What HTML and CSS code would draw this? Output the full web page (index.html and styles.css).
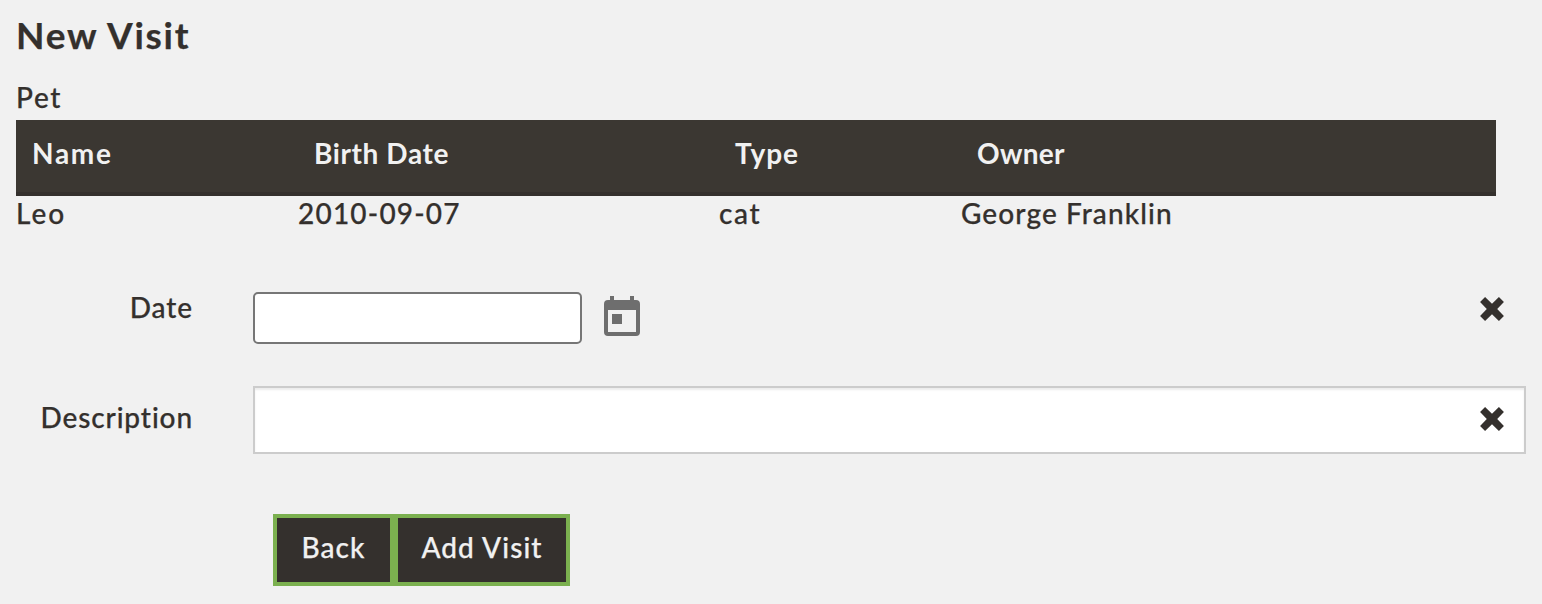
FILE: index.html
```html
<!DOCTYPE html>
<html lang="en">
<head>
<meta charset="utf-8">
<title>New Visit</title>
<link rel="stylesheet" href="styles.css">
</head>
<body>
<main class="page">
  <h2 class="title">New Visit</h2>
  <div class="caption">Pet</div>
  <div class="table">
    <div class="row head"><span class="h-name">Name</span><span class="h-birth">Birth Date</span><span class="h-type">Type</span><span class="h-owner">Owner</span></div>
    <div class="row"><span class="leo">Leo</span><span class="birth">2010-09-07</span><span class="cat">cat</span><span class="owner">George Franklin</span></div>
  </div>
  <form class="form">
    <div class="field date-field">
      <label class="l-date" for="date">Date</label>
      <input class="date" id="date">
      <svg class="calendar" viewBox="0 0 36 40"><path fill="#6e6e6e" fill-rule="evenodd" d="M6 0h4v4h16V0h4v4h2a4 4 0 0 1 4 4v28a4 4 0 0 1-4 4H4a4 4 0 0 1-4-4V8a4 4 0 0 1 4-4h2zM4 14v22h28V14zM8 18h10v10H8z"/></svg>
      <svg class="cross" viewBox="0 0 24 24"><path d="M5.6 1L12 7.2 18.4 1 23 5.6 16.8 12 23 18.4 18.4 23 12 16.8 5.6 23 1 18.4 7.2 12 1 5.6z"/></svg>
    </div>
    <div class="field desc-field">
      <label class="l-desc" for="description">Description</label>
      <input class="desc" id="description">
      <svg class="cross over" viewBox="0 0 24 24"><path d="M5.6 1L12 7.2 18.4 1 23 5.6 16.8 12 23 18.4 18.4 23 12 16.8 5.6 23 1 18.4 7.2 12 1 5.6z"/></svg>
    </div>
    <div class="actions">
      <button type="button" class="btn back">Back</button><button type="button" class="btn add">Add Visit</button>
    </div>
  </form>
</main>
</body>
</html>
```
FILE: styles.css
```css
* { box-sizing: border-box; }
body { margin: 0; background: #f1f1f1; color: #34302d; font: 500 28px/40px Lato, "Open Sans", sans-serif; font-variant-ligatures: none; -webkit-text-stroke: .25px currentColor; overflow: hidden; }
.page { height: 604px; padding: 15px 16px 0; }
.title { margin: 0; font-size: 37px; line-height: 40px; height: 40px; font-weight: 700; letter-spacing: 1.75px; }
.caption { margin-top: 22px; height: 43px; letter-spacing: 1.7px; }
.table { width: 1480px; }
.row { display: grid; grid-template-columns: 282px 421px 242px 1fr; line-height: 34px; height: 36px; white-space: nowrap; }
.head { height: 76px; padding-left: 16px; line-height: 66px; color: #f1f1f1; background: #3b3732; border-bottom: 4px solid #34302d; font-weight: 700; -webkit-text-stroke: 0; }
.h-name { letter-spacing: 1.7px; }
.h-birth { letter-spacing: .6px; }
.h-type { letter-spacing: 1px; }
.h-owner { letter-spacing: .3px; }
.leo { letter-spacing: 2px; }
.birth { letter-spacing: 1.2px; }
.cat { letter-spacing: 1.7px; }
.owner { letter-spacing: 1.1px; }
.form { margin: 0; }
.field { display: flex; align-items: flex-start; position: relative; }
.field label { width: 177px; margin-right: 60px; text-align: right; white-space: nowrap; letter-spacing: .9px; }
.date-field { margin-top: 56px; height: 98px; padding-top: 4px; }
.date-field label { margin-top: -5px; }
.date { width: 329px; height: 52px; border: 2px solid #767676; border-radius: 5px; background: #fff; padding: 0 4px; font: inherit; }
.calendar { width: 36px; height: 40px; margin: 4px 0 0 22px; }
.cross { width: 26px; height: 26px; margin: 4px 21px 0 auto; fill: #34302d; }
.desc-field label { margin-top: 11px; }
.desc { width: 1273px; height: 68px; border: 2px solid #ccc; border-radius: 0; background: #fff; box-shadow: inset 0 2px 2px rgba(0,0,0,.075); padding: 12px 24px; font: inherit; }
.over { position: absolute; right: 0; top: 16px; margin-top: 4px; }
.actions { display: flex; padding: 60px 0 0 257px; }
.btn { height: 72px; margin: 0; padding: 0 0 6px; border: 4px solid #7bb04f; border-radius: 0; background: #34302d; color: #f1f1f1; font: inherit; letter-spacing: 1.1px; }
.back { width: 121px; }
.add { width: 176px; }
```
